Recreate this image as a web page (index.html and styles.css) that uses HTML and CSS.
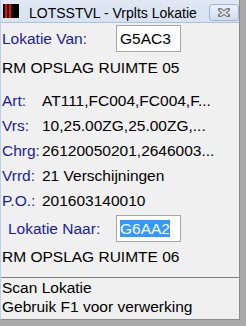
FILE: index.html
```html
<!DOCTYPE html>
<html>
<head>
<meta charset="utf-8">
<link rel="stylesheet" href="styles.css">
</head>
<body>
<div class="window">
  <div class="titlebar">
    <div class="app-icon"><span class="bar"></span><span class="bar"></span></div>
    <div class="title">LOTSSTVL - Vrplts Lokatie</div>
    <div class="close-btn">
      <svg width="12" height="9" viewBox="0 0 12 9">
        <path d="M2 1.5 L10 7.5 M10 1.5 L2 7.5" stroke="#767676" stroke-width="4" stroke-linecap="square" fill="none"/>
        <path d="M2 1.5 L10 7.5 M10 1.5 L2 7.5" stroke="#e4e6ea" stroke-width="1.6" stroke-linecap="butt" fill="none"/>
      </svg>
    </div>
  </div>
  <div class="content">
    <div class="loc-row">
      <div class="loc-label">Lokatie Van:</div>
      <div class="loc-box">G5AC3</div>
    </div>
    <div class="loc-name first">RM OPSLAG RUIMTE 05</div>
    <div class="data">
      <div class="data-row"><span class="data-label">Art:</span><span class="data-value">AT111,FC004,FC004,F...</span></div>
      <div class="data-row"><span class="data-label">Vrs:</span><span class="data-value">10,25.00ZG,25.00ZG,...</span></div>
      <div class="data-row"><span class="data-label">Chrg:</span><span class="data-value">26120050201,2646003...</span></div>
      <div class="data-row"><span class="data-label">Vrrd:</span><span class="data-value">21 Verschijningen</span></div>
      <div class="data-row"><span class="data-label">P.O.:</span><span class="data-value">201603140010</span></div>
    </div>
    <div class="loc-row to">
      <div class="loc-label indent">Lokatie Naar:</div>
      <div class="loc-box"><span class="selected">G6AA2</span></div>
    </div>
    <div class="loc-name second">RM OPSLAG RUIMTE 06</div>
  </div>
  <div class="footer">
    <div class="footer-line">Scan Lokatie</div>
    <div class="footer-line">Gebruik F1 voor verwerking</div>
  </div>
</div>
</body>
</html>
```

FILE: styles.css
```css
html, body {
  margin: 0;
  padding: 0;
}
body {
  width: 246px;
  height: 326px;
  background: #a9a9a9;
  font-family: "Liberation Sans", Arial, sans-serif;
  overflow: hidden;
}
.window {
  box-sizing: border-box;
  width: 240px;
  height: 320px;
  background: #f0f0f0;
  border-left: 1px solid #bcd2ea;
  border-right: 1px solid #8c8c8c;
  border-bottom: 1px solid #8c8c8c;
  display: flex;
  flex-direction: column;
}
.titlebar {
  box-sizing: border-box;
  height: 23px;
  flex: 0 0 23px;
  background: linear-gradient(#dfe8f3, #d7e3f1);
  border-bottom: 1px solid #a3c2e5;
  display: flex;
  align-items: flex-start;
}
.app-icon {
  width: 16px;
  height: 14px;
  margin: 4px 0 0 2px;
  background: #000;
  display: flex;
  gap: 2px;
  padding-left: 2px;
  box-sizing: border-box;
}
.app-icon .bar {
  width: 2px;
  height: 14px;
  background: #ff0000;
}
.title {
  margin: 5px 0 0 10px;
  font-size: 14px;
  line-height: 16px;
  color: #000;
  white-space: nowrap;
}
.close-btn {
  box-sizing: border-box;
  margin: 4px 0 0 auto;
  width: 30px;
  height: 17px;
  border: 1px solid #a2b5cf;
  border-radius: 3px;
  background: linear-gradient(#eaf0f8, #d2deee);
  display: flex;
  align-items: center;
  justify-content: center;
}
.close-btn svg {
  display: block;
}
.content {
  flex: 1;
  padding-left: 1px;
  font-size: 15.5px;
  line-height: 25px;
  color: #000;
}
.loc-row {
  display: flex;
  align-items: center;
  margin-top: 2px;
  height: 27px;
}
.loc-label {
  flex: 0 0 114px;
  box-sizing: border-box;
  color: #1c1ca2;
  white-space: nowrap;
}
.loc-label.indent {
  padding-left: 6px;
}
.loc-box {
  box-sizing: border-box;
  width: 65px;
  height: 27px;
  border: 1px solid #a6a6a6;
  background: #fff;
  padding-left: 3px;
  white-space: nowrap;
}
.selected {
  background: #3399ff;
  color: #fff;
}
.loc-name {
  white-space: nowrap;
}
.loc-name.first {
  margin-top: 3px;
}
.loc-name.second {
  margin-top: 2px;
}
.data {
  margin-top: 8px;
}
.data-row {
  display: flex;
  white-space: nowrap;
}
.data-label {
  flex: 0 0 40px;
  color: #1c1ca2;
}
.data-value {
  color: #000;
}
.footer {
  flex: 0 0 auto;
  border-top: 1px solid #7c7c7c;
  padding: 0 0 3px 1px;
  font-size: 15.5px;
  line-height: 19px;
  color: #000;
}
.footer-line {
  white-space: nowrap;
}
```
